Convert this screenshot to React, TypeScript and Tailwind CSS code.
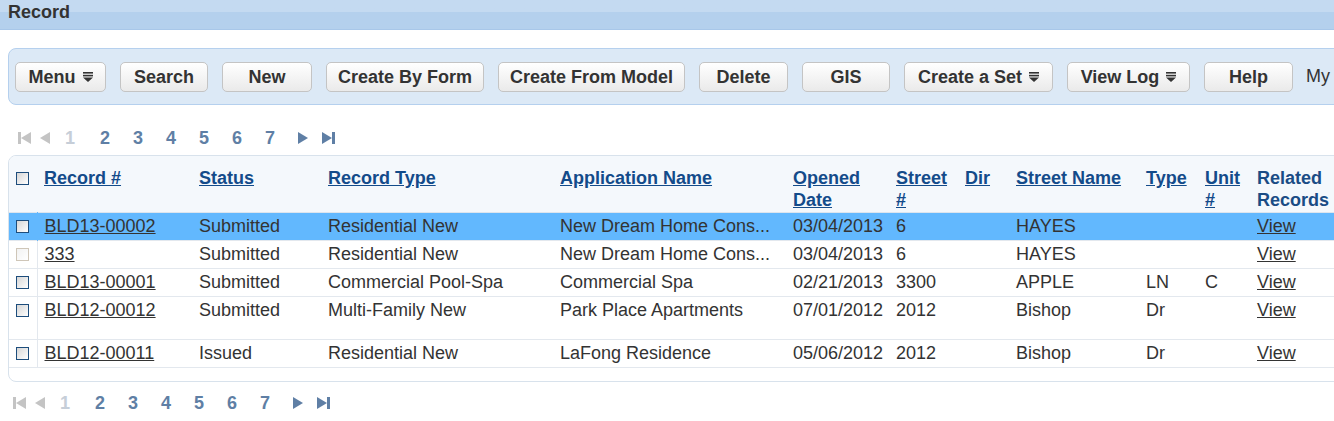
import React from "react";

const buttons = [
	{ label: "Menu", w: "w-[91px]", dd: true },
	{ label: "Search", w: "w-[88px]" },
	{ label: "New", w: "w-[90px]" },
	{ label: "Create By Form", w: "w-[158px]" },
	{ label: "Create From Model", w: "w-[187px]" },
	{ label: "Delete", w: "w-[89px]" },
	{ label: "GIS", w: "w-[88px]" },
	{ label: "Create a Set", w: "w-[149px]", dd: true },
	{ label: "View Log", w: "w-[123px]", dd: true },
	{ label: "Help", w: "w-[89px]" },
];

const rows = [
	{ id: "BLD13-00002", status: "Submitted", type: "Residential New", app: "New Dream Home Cons...", date: "03/04/2013", no: "6", street: "HAYES", st: "", unit: "", active: true },
	{ id: "333", status: "Submitted", type: "Residential New", app: "New Dream Home Cons...", date: "03/04/2013", no: "6", street: "HAYES", st: "", unit: "", disabled: true },
	{ id: "BLD13-00001", status: "Submitted", type: "Commercial Pool-Spa", app: "Commercial Spa", date: "02/21/2013", no: "3300", street: "APPLE", st: "LN", unit: "C" },
	{ id: "BLD12-00012", status: "Submitted", type: "Multi-Family New", app: "Park Place Apartments", date: "07/01/2012", no: "2012", street: "Bishop", st: "Dr", unit: "", tall: true },
	{ id: "BLD12-00011", status: "Issued", type: "Residential New", app: "LaFong Residence", date: "05/06/2012", no: "2012", street: "Bishop", st: "Dr", unit: "" },
];

const DropIcon = () => (
	<svg width="10" height="10" viewBox="0 0 10 10" className="ml-[7px]">
		<rect x="0" y="0" width="10" height="1.6" fill="#333" />
		<rect x="0" y="2.8" width="10" height="1.6" fill="#333" />
		<polygon points="0,5.6 10,5.6 5,10" fill="#333" />
	</svg>
);

const Checkbox = ({ disabled }: { disabled?: boolean }) => (
	<span
		className={
			disabled
				? "block w-[13px] h-[13px] border border-[#cfc6b8] bg-gradient-to-br from-[#f2f2f2] to-white"
				: "block w-[13px] h-[13px] border border-[#1d4d7c] bg-gradient-to-br from-[#d6d6d6] to-white"
		}
	/>
);

const Pager = ({ pad }: { pad: string }) => (
	<div className={`flex items-center h-[22px] text-[18px] font-bold leading-[22px] ${pad}`}>
		<svg width="13" height="12" viewBox="0 0 13 12">
			<rect x="0" y="0" width="3" height="12" fill="#c4c4c4" />
			<polygon points="13,0 13,12 3,6" fill="#c4c4c4" />
		</svg>
		<svg width="10" height="12" viewBox="0 0 10 12" className="ml-[9px]">
			<polygon points="10,0 10,12 0,6" fill="#c4c4c4" />
		</svg>
		<span className="ml-[15px] w-[35px] text-[#c6ced8]">1</span>
		{["2", "3", "4", "5", "6", "7"].map((n) => (
			<span key={n} className="w-[33px] text-[#5f7fa5]">
				{n}
			</span>
		))}
		<svg width="10" height="12" viewBox="0 0 10 12">
			<polygon points="0,0 0,12 10,6" fill="#5f7fa5" />
		</svg>
		<svg width="13" height="12" viewBox="0 0 13 12" className="ml-[14px]">
			<polygon points="0,0 0,12 10,6" fill="#5f7fa5" />
			<rect x="10" y="0" width="3" height="12" fill="#5f7fa5" />
		</svg>
	</div>
);

const th = "text-left align-top pl-2 pt-[11px] pb-[1px] leading-[22px] font-bold";
const hLink = "underline text-[#134b8a]";

export default function App() {
	return (
		<div className="w-[1334px] h-[421px] overflow-hidden bg-white text-[18px] text-[#333] font-['Liberation_Sans',Arial,sans-serif]">
			<div className="h-[30px] border-b border-[#a8c7e9] bg-gradient-to-b from-[#c4daf1] from-40% to-[#b4d0ed] to-40% px-2 font-bold leading-[24px]">
				Record
			</div>

			<div className="mt-[18px] ml-2 w-[1360px] h-[57px] flex items-center pl-[6px] gap-[14px] bg-[#dce9f6] border border-[#b5d0ee] rounded-l-[8px] whitespace-nowrap">
				{buttons.map((b) => (
					<div
						key={b.label}
						className={`${b.w} h-[30px] shrink-0 flex items-center justify-center pt-px rounded-[5px] border border-[#c4c4c4] bg-gradient-to-b from-white to-[#eaeaea] font-bold`}
					>
						{b.label}
						{b.dd && <DropIcon />}
					</div>
				))}
				<span className="-ml-px">My</span>
			</div>

			<div className="mt-[22px]">
				<Pager pad="pl-[18px]" />
			</div>

			<div className="mt-[6px] ml-2 w-[1340px] border border-[#d8e2ec] rounded-l-[8px] overflow-hidden pb-[13px]">
				<table className="table-fixed border-collapse w-[1330px]">
					<colgroup>
						<col className="w-[28px]" />
						<col className="w-[154px]" />
						<col className="w-[129px]" />
						<col className="w-[232px]" />
						<col className="w-[233px]" />
						<col className="w-[103px]" />
						<col className="w-[69px]" />
						<col className="w-[51px]" />
						<col className="w-[130px]" />
						<col className="w-[59px]" />
						<col className="w-[52px]" />
						<col className="w-[90px]" />
					</colgroup>
					<thead>
						<tr className="bg-[#f4f8fc] border-b border-[#dde5ee]">
							<th className="align-top pl-[7px] pt-[16px]">
								<Checkbox />
							</th>
							<th className={`${th} !pl-[7px]`}><span className={hLink}>Record #</span></th>
							<th className={th}><span className={hLink}>Status</span></th>
							<th className={th}><span className={hLink}>Record Type</span></th>
							<th className={th}><span className={hLink}>Application Name</span></th>
							<th className={th}><span className={hLink}>Opened Date</span></th>
							<th className={th}><span className={hLink}>Street #</span></th>
							<th className={th}><span className={hLink}>Dir</span></th>
							<th className={th}><span className={hLink}>Street Name</span></th>
							<th className={th}><span className={hLink}>Type</span></th>
							<th className={th}><span className={hLink}>Unit #</span></th>
							<th className={`${th} text-[#1a4c85]`}>Related Records</th>
						</tr>
					</thead>
					<tbody>
						{rows.map((r) => {
							const td = `align-top pl-2 pt-[2px] leading-[22px] whitespace-nowrap overflow-hidden ${r.tall ? "pb-[18px]" : "pb-[3px]"}`;
							return (
								<tr key={r.id} className={`border-b border-[#e3e8ee] ${r.active ? "bg-[#62b8fe]" : ""}`}>
									<td className={`align-top pl-[7px] pt-[7px] border-r ${r.active ? "border-r-[#62b8fe]" : "border-r-[#e3e8ee]"}`}>
										<Checkbox disabled={r.disabled} />
									</td>
									<td className={`${td} !pl-[7px]`}><span className="underline">{r.id}</span></td>
									<td className={td}>{r.status}</td>
									<td className={td}>{r.type}</td>
									<td className={td}>{r.app}</td>
									<td className={td}>{r.date}</td>
									<td className={td}>{r.no}</td>
									<td className={td}></td>
									<td className={td}>{r.street}</td>
									<td className={td}>{r.st}</td>
									<td className={td}>{r.unit}</td>
									<td className={td}><span className="underline">View</span></td>
								</tr>
							);
						})}
					</tbody>
				</table>
			</div>

			<div className="mt-[10px]">
				<Pager pad="pl-[13px]" />
			</div>
		</div>
	);
}
